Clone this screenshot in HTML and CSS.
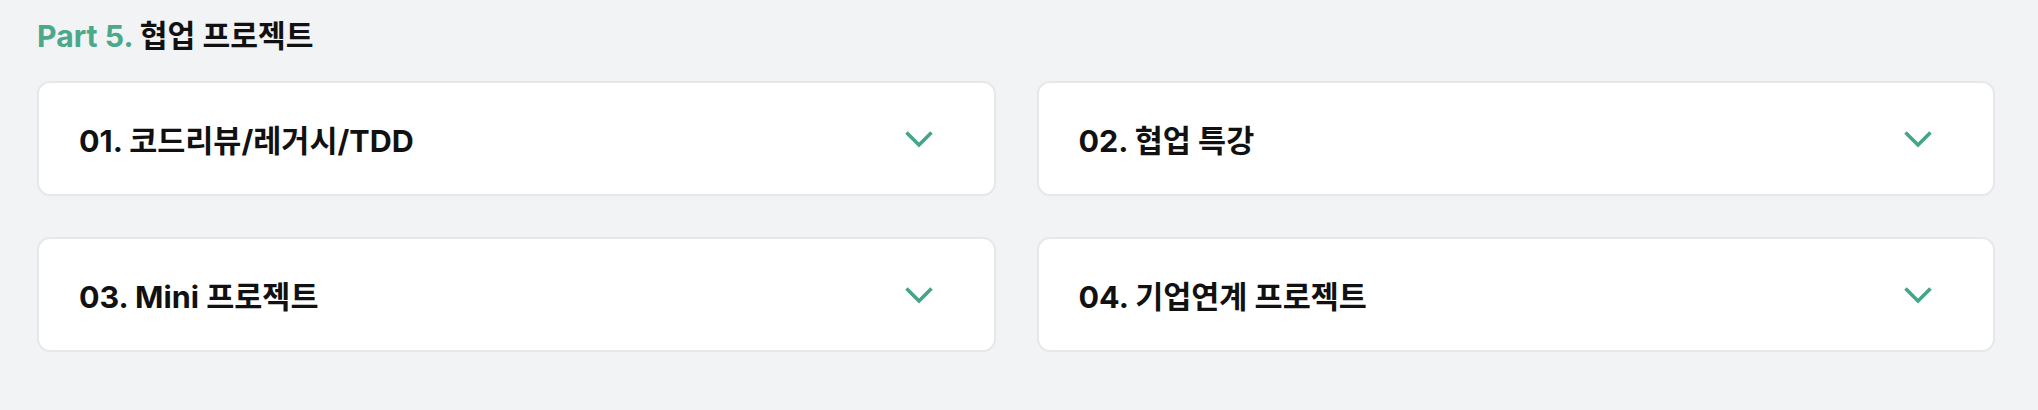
FILE: index.html
```html
<!DOCTYPE html>
<html lang="ko">
<head>
<meta charset="utf-8">
<link rel="stylesheet" href="styles.css">
</head>
<body>
<section class="part">
  <h2 class="part-title"><span class="part-num">Part 5.</span> 협업 프로젝트</h2>
  <div class="grid">
    <div class="card">
      <span class="card-title">01. 코드리뷰/레거시/TDD</span>
      <svg class="chev" width="32" height="32" viewBox="0 0 32 32"><polyline points="3.5,9.5 16,22 28.5,9.5" fill="none" stroke="#45a589" stroke-width="3.6"/></svg>
    </div>
    <div class="card">
      <span class="card-title">02. 협업 특강</span>
      <svg class="chev" width="32" height="32" viewBox="0 0 32 32"><polyline points="3.5,9.5 16,22 28.5,9.5" fill="none" stroke="#45a589" stroke-width="3.6"/></svg>
    </div>
    <div class="card">
      <span class="card-title">03. Mini 프로젝트</span>
      <svg class="chev" width="32" height="32" viewBox="0 0 32 32"><polyline points="3.5,9.5 16,22 28.5,9.5" fill="none" stroke="#45a589" stroke-width="3.6"/></svg>
    </div>
    <div class="card">
      <span class="card-title">04. 기업연계 프로젝트</span>
      <svg class="chev" width="32" height="32" viewBox="0 0 32 32"><polyline points="3.5,9.5 16,22 28.5,9.5" fill="none" stroke="#45a589" stroke-width="3.6"/></svg>
    </div>
  </div>
</section>
</body>
</html>
```
FILE: styles.css
```css
html, body {
  margin: 0;
  padding: 0;
  background: #f2f3f5;
}
body {
  font-family: Inter, "Noto Sans CJK KR", sans-serif;
  color: #111;
}
.part {
  padding: 17px 43px 0 37px;
}
.part-title {
  margin: 0;
  font-size: 30.2px;
  line-height: 38px;
  font-weight: 700;
  letter-spacing: 0;
  color: #111;
}
.part-num {
  color: #4aa88b;
}
.grid {
  margin-top: 26px;
  display: grid;
  grid-template-columns: 1fr 1fr;
  column-gap: 41px;
  row-gap: 41px;
}
.card {
  box-sizing: border-box;
  height: 115px;
  background: #fff;
  border: 2px solid #e6e7eb;
  border-radius: 13px;
  display: flex;
  align-items: center;
  justify-content: space-between;
  padding: 0 59px 0 40px;
}
.card-title {
  font-size: 30.5px;
  font-weight: 700;
  letter-spacing: 0;
  color: #111;
}
.chev {
  display: block;
}
```
